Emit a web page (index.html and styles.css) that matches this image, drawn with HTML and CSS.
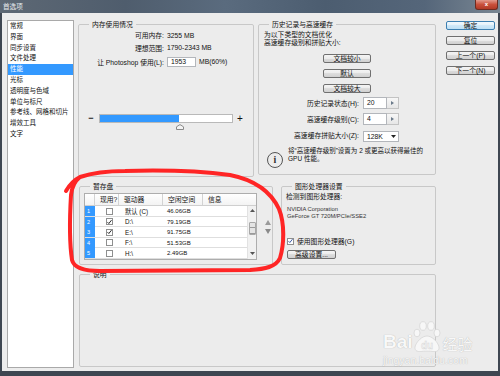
FILE: index.html
```html
<!DOCTYPE html>
<html lang="zh-CN">
<head>
<meta charset="utf-8">
<title>首选项</title>
<link rel="stylesheet" href="styles.css">
</head>
<body>
<div class="frame">
  <div class="titlebar">
    <span class="title">首选项</span>
    <span class="close">x</span>
  </div>
  <div class="client">
    <ul class="nav">
      <li>常规</li>
      <li>界面</li>
      <li>同步设置</li>
      <li>文件处理</li>
      <li class="sel">性能</li>
      <li>光标</li>
      <li>透明度与色域</li>
      <li>单位与标尺</li>
      <li>参考线、网格和切片</li>
      <li>增效工具</li>
      <li>文字</li>
    </ul>

    <div class="main">
      <div class="row row1">
        <fieldset class="grp mem">
          <legend>内存使用情况</legend>
          <div class="mem-grid">
            <span class="lbl">可用内存:</span><span class="val">3255 MB</span>
            <span class="lbl">理想范围:</span><span class="val">1790-2343 MB</span>
            <span class="lbl">让 Photoshop 使用(L):</span><span class="input mem-input">1953</span><span class="unit">MB(60%)</span>
          </div>
          <div class="slider">
            <span class="pm minus">−</span>
            <div class="track">
              <div class="fill" style="width:60%"></div>
              <svg class="thumb" width="8" height="6" viewBox="0 0 8 6"><path d="M0.5 5.5V2.8L4 0.6L7.5 2.8V5.5Z" fill="#f4f4f4" stroke="#8a8a8a" stroke-width="1"/></svg>
            </div>
            <span class="pm plus">+</span>
          </div>
        </fieldset>

        <fieldset class="grp hist">
          <legend>历史记录与高速缓存</legend>
          <p class="hist-intro">为以下类型的文档优化<br>高速缓存级别和拼贴大小:</p>
          <div class="hist-btns">
            <span class="btn">文档较小</span>
            <span class="btn">默认</span>
            <span class="btn">文档较大</span>
          </div>
          <div class="hist-grid">
            <span class="lbl">历史记录状态(H):</span>
            <span class="spin"><span class="input">20</span><span class="spin-btn"><svg width="3" height="4" viewBox="0 0 3 4"><path d="M0 0L3 2L0 4Z" fill="#6a7a8a"/></svg></span></span>
            <span class="lbl">高速缓存级别(C):</span>
            <span class="spin"><span class="input">4</span><span class="spin-btn"><svg width="3" height="4" viewBox="0 0 3 4"><path d="M0 0L3 2L0 4Z" fill="#6a7a8a"/></svg></span></span>
            <span class="lbl">高速缓存拼贴大小(Z):</span>
            <span class="select">128K<svg class="caret" width="5" height="3" viewBox="0 0 5 3"><path d="M0 0H5L2.5 3Z" fill="#222"/></svg></span>
          </div>
          <div class="info">
            <span class="info-icon">i</span>
            <p class="info-text">将“高速缓存级别”设置为 2 或更高以获得最佳的<br>GPU 性能。</p>
          </div>
        </fieldset>
      </div>

      <div class="row row2">
        <fieldset class="grp scratch">
          <legend>暂存盘</legend>
          <div class="scratch-body">
            <div class="tbl">
              <div class="thead">
                <span class="h"></span><span class="h">现用?</span><span class="h">驱动器</span><span class="h">空闲空间</span><span class="h last">信息</span>
              </div>
              <div class="tbody">
                <div class="rows">
                  <div class="tr"><span class="num">1</span><span class="cbc"><i class="cb"></i></span><span class="drv">默认 (C)</span><span class="free">46.06GB</span><span></span></div>
                  <div class="tr"><span class="num">2</span><span class="cbc"><i class="cb"><svg width="6" height="6" viewBox="0 0 6 6"><path d="M0.6 3.2L2.2 4.8L5.4 0.8" fill="none" stroke="#111" stroke-width="1.1"/></svg></i></span><span class="drv">D:\</span><span class="free">79.19GB</span><span></span></div>
                  <div class="tr"><span class="num">3</span><span class="cbc"><i class="cb"><svg width="6" height="6" viewBox="0 0 6 6"><path d="M0.6 3.2L2.2 4.8L5.4 0.8" fill="none" stroke="#111" stroke-width="1.1"/></svg></i></span><span class="drv">E:\</span><span class="free">91.75GB</span><span></span></div>
                  <div class="tr"><span class="num">4</span><span class="cbc"><i class="cb"></i></span><span class="drv">F:\</span><span class="free">51.53GB</span><span></span></div>
                  <div class="tr"><span class="num">5</span><span class="cbc"><i class="cb"></i></span><span class="drv">H:\</span><span class="free">2.49GB</span><span></span></div>
                </div>
                <div class="vscroll">
                  <svg width="5" height="3" viewBox="0 0 5 3"><path d="M0 3H5L2.5 0Z" fill="#555"/></svg>
                  <span class="vthumb"></span>
                  <svg width="5" height="3" viewBox="0 0 5 3"><path d="M0 0H5L2.5 3Z" fill="#555"/></svg>
                </div>
              </div>
            </div>
            <div class="updown">
              <svg width="6" height="5" viewBox="0 0 6 5"><path d="M0 5H6L3 0Z" fill="#9a9a9a"/></svg>
              <svg width="6" height="5" viewBox="0 0 6 5"><path d="M0 0H6L3 5Z" fill="#8a8a8a"/></svg>
            </div>
          </div>
        </fieldset>

        <fieldset class="grp gpu">
          <legend>图形处理器设置</legend>
          <div class="gpu-body">
            <p class="detect">检测到图形处理器:</p>
            <p class="gpu-name">NVIDIA Corporation<br>GeForce GT 720M/PCIe/SSE2</p>
            <div class="chk-row">
              <i class="cb"><svg width="6" height="6" viewBox="0 0 6 6"><path d="M0.6 3.2L2.2 4.8L5.4 0.8" fill="none" stroke="#2a4aa0" stroke-width="1.1"/></svg></i>
              <span>使用图形处理器(G)</span>
            </div>
            <span class="btn adv">高级设置...</span>
          </div>
        </fieldset>
      </div>

      <fieldset class="grp desc">
        <legend>说明</legend>
      </fieldset>
    </div>

    <div class="side-btns">
      <span class="btn default">确定</span>
      <span class="btn">复位</span>
      <span class="btn">上一个(P)</span>
      <span class="btn">下一个(N)</span>
    </div>
  </div>
</div>

<svg class="annot" width="500" height="376" viewBox="0 0 500 376">
  <path d="M66 191C70 184 74 180 80 177C95 172 110 171 125 171C160 170 200 171 230 175C255 180 271 192 279 209C285 224 284 245 280 258C276 267 265 269 250 270C200 270 150 271 100 271C85 271 74 268 72 260C69 240 70 212 71 195C72 186 75 181 80 177" fill="none" stroke="#ff2525" stroke-width="4" stroke-linecap="round" stroke-linejoin="round"/>
</svg>

<div class="wm">
  <div class="wm-logo">
    <span class="wm-bai">Bai</span>
    <svg class="wm-paw" width="30" height="32" viewBox="0 0 30 32">
      <g fill="#f7f7f7" stroke="#d2d2d2" stroke-width="0.7">
        <ellipse cx="5" cy="13" rx="3" ry="3.8"/>
        <ellipse cx="11" cy="6" rx="3.3" ry="4.3"/>
        <ellipse cx="19" cy="6" rx="3.3" ry="4.3"/>
        <ellipse cx="25" cy="13" rx="3" ry="3.8"/>
        <path d="M15 16C10 16 4 22 3 27C2.5 31 6 32 9 31.5C12 31 18 31 21 31.5C24 32 27.5 31 27 27C26 22 20 16 15 16Z"/>
      </g>
      <text x="15" y="29" text-anchor="middle" font-family="Liberation Sans, sans-serif" font-size="10" font-weight="bold" fill="#f2f2f2" stroke="#d6d6d6" stroke-width="0.4">du</text>
    </svg>
    <span class="wm-jy">经验</span>
  </div>
  <div class="wm-url">jingyan.baidu.com</div>
</div>
</body>
</html>
```
FILE: styles.css
```css
* { box-sizing: border-box; margin: 0; padding: 0; }
html, body { width: 500px; height: 376px; overflow: hidden; }
body {
  background: #3e4651;
  font-family: "Liberation Sans", "Noto Sans CJK SC", sans-serif;
  font-size: 6.8px;
  color: #111;
  position: relative;
}
.frame { width: 500px; height: 376px; display: flex; flex-direction: column; }

.titlebar {
  height: 13px;
  display: flex;
  justify-content: space-between;
  padding-left: 3px;
  background: linear-gradient(90deg, #5d6874 0%, #4f5d6d 25%, #5a6b7e 45%, #4c5d70 65%, #55667a 85%, #7a8793 100%);
}
.title { color: #e8ebee; line-height: 13px; font-size: 6.6px; }
.close {
  width: 23px;
  height: 10px;
  margin-right: 2px;
  background: linear-gradient(#e29a8c, #c9503b 50%, #b13a26);
  border: 1px solid #6e2b20;
  border-top: none;
  border-radius: 0 0 3px 3px;
  color: #fff;
  font-size: 6px;
  font-weight: bold;
  text-align: center;
  line-height: 8px;
}

.client {
  margin: 0 2px;
  height: 358px;
  background: #ececec;
  display: flex;
  padding: 7px 3px 3px 5px;
}

.nav {
  list-style: none;
  width: 67px;
  height: 348px;
  background: #fff;
  border: 1px solid #a9a9a9;
  font-size: 6.5px;
}
.nav li { height: 10.8px; line-height: 10.8px; padding-left: 2px; white-space: nowrap; }
.nav li.sel { background: #3399ff; color: #fff; }

.main { width: 358px; margin-left: 4px; display: flex; flex-direction: column; }
.row { display: flex; align-items: flex-start; }

.grp {
  border: 1px solid #c8c8c8;
  border-radius: 2px;
  min-width: 0;
  padding: 0;
  margin: 0;
}
.grp legend { margin-left: 10px; padding: 0 3px; line-height: 9px; font-size: 6.8px; }

.mem { width: 176px; height: 157px; }
.hist { width: 178px; height: 155px; margin-left: 4px; }

.mem-grid {
  display: grid;
  grid-template-columns: 85px max-content max-content;
  grid-template-rows: 12px 13px 15px;
  column-gap: 3px;
  align-items: center;
  white-space: nowrap;
}
.lbl { text-align: right; white-space: nowrap; }
.val { grid-column: span 2; }
.input {
  display: block;
  background: #fff;
  border: 1px solid #b3b6bb;
  padding-left: 3px;
}
.mem-input { width: 29px; height: 10px; line-height: 8px; }

.slider { display: flex; align-items: center; margin-top: 45px; height: 9px; }
.pm { width: 10px; text-align: center; font-size: 9px; font-weight: bold; line-height: 9px; }
.minus { margin-left: 7px; }
.plus { margin-left: 2px; font-weight: normal; font-size: 10px; }
.track {
  position: relative;
  margin-left: 3px;
  width: 134px;
  height: 9px;
  background: #fff;
  border: 1px solid #b9b9b9;
}
.fill { height: 100%; background: #3399ff; }
.thumb { position: absolute; left: 76px; top: 9px; }

.hist-intro { margin: 2px 0 0 5px; line-height: 8px; }
.hist-btns {
  display: flex;
  flex-direction: column;
  align-items: center;
  gap: 6px;
  margin-top: 7px;
}
.hist-btns .btn { width: 48px; }

.hist-grid {
  display: grid;
  grid-template-columns: 100px max-content;
  grid-auto-rows: 12px;
  column-gap: 4px;
  row-gap: 4px;
  align-items: center;
  margin-top: 4px;
}
.spin { display: flex; height: 12px; }
.spin .input { width: 24px; height: 12px; line-height: 10px; }
.spin-btn {
  width: 12px;
  height: 12px;
  border: 1px solid #c3c3c3;
  border-left: none;
  background: linear-gradient(#f7f7f7, #e6e6e6);
  display: flex;
  align-items: center;
  justify-content: center;
}
.select {
  display: flex;
  align-items: center;
  justify-content: space-between;
  width: 36px;
  height: 11px;
  margin-top: 2px;
  padding: 0 2px 0 3px;
  background: #fff;
  border: 1px solid #b3b6bb;
}

.info { display: flex; align-items: flex-start; margin-top: 6px; padding-left: 8px; }
.info-icon {
  width: 16px;
  height: 16px;
  margin-top: 5px;
  border: 1px solid #555;
  border-radius: 50%;
  font-family: "Liberation Serif", serif;
  font-size: 10px;
  font-weight: bold;
  line-height: 14px;
  text-align: center;
  color: #333;
}
.info-text { margin-left: 5px; line-height: 7.5px; white-space: nowrap; font-size: 6.5px; }

.row2 { margin-top: 5px; }
.scratch { width: 194px; height: 83px; margin-left: 1px; }
.gpu { width: 155px; height: 83px; margin-left: 8px; }

.scratch-body { display: flex; margin: 2px 0 0 4px; }
.tbl { width: 173px; border: 1px solid #adadad; background: #fff; }
.thead {
  display: grid;
  grid-template-columns: 10px 24px 44px 40px 1fr;
  height: 12px;
  background: linear-gradient(#ffffff, #f3f3f3);
  border-bottom: 1px solid #cfcfcf;
}
.h { border-right: 1px solid #d3d3d3; padding-left: 5px; line-height: 11px; white-space: nowrap; }
.h.last { border-right: none; }
.tbody { display: flex; height: 53px; overflow: hidden; }
.rows { flex: 1; }
.tr {
  display: grid;
  grid-template-columns: 10px 24px 44px 40px 1fr;
  height: 10.6px;
  border-bottom: 1px solid #dedede;
  align-items: center;
  font-size: 6px;
}
.num {
  height: 100%;
  background: #3399ff;
  color: #fff;
  padding-left: 2px;
  line-height: 10px;
  font-size: 5.5px;
}
.cbc { display: flex; padding-left: 11px; }
.cb {
  display: flex;
  align-items: center;
  justify-content: center;
  width: 7px;
  height: 7px;
  background: #fff;
  border: 1px solid #8e8f8f;
}
.drv { padding-left: 6px; white-space: nowrap; font-size: 6.3px; }
.free { padding-left: 4px; }
.vscroll {
  width: 9px;
  background: #f1f1f1;
  border-left: 1px solid #e2e2e2;
  display: flex;
  flex-direction: column;
  align-items: center;
  padding-top: 3px;
}
.vthumb {
  width: 7px;
  height: 13px;
  margin-top: 10px;
  margin-bottom: 17px;
  border: 1px solid #a8a8a8;
  border-radius: 1px;
  background: repeating-linear-gradient(#e4e4e4 0 4px, #9a9a9a 4px 5px, #e4e4e4 5px 6px) ;
}
.updown {
  display: flex;
  flex-direction: column;
  gap: 4px;
  margin-left: 8px;
  padding-top: 27px;
}

.gpu-body { padding-left: 4px; }
.detect { margin-top: 2px; line-height: 8px; }
.gpu-name { margin-top: 5px; line-height: 7px; font-size: 5.8px; color: #333; margin-left: 1px; }
.chk-row { display: flex; align-items: center; gap: 3px; height: 8px; margin-top: 17px; padding-left: 1px; }
.btn {
  display: block;
  height: 9px;
  line-height: 7px;
  text-align: center;
  border: 1px solid #707070;
  border-radius: 2px;
  background: linear-gradient(#f4f4f4, #ebebeb 50%, #dddddd 50%, #d0d0d0);
  white-space: nowrap;
}
.adv { width: 49px; margin-top: 5px; margin-left: 1px; }

.desc { width: 357px; height: 97px; margin-top: 5px; margin-left: 1px; }

.side-btns {
  width: 49px;
  margin-left: 10px;
  padding-top: 1px;
  display: flex;
  flex-direction: column;
  gap: 6px;
}
.btn.default {
  border-color: #3c7fb1;
  background: linear-gradient(#f1f8fd, #e2f1fb 50%, #cfe8f8 50%, #bddff5);
}

.annot { position: absolute; left: 0; top: 0; pointer-events: none; }

.wm { position: absolute; left: 383px; top: 320px; color: #f8f8f8; }
.wm-logo { display: flex; align-items: flex-end; height: 32px; }
.wm-bai {
  font-family: "Liberation Sans", sans-serif;
  font-size: 19px;
  font-weight: bold;
  line-height: 19px;
  margin-bottom: 1px;
  text-shadow: 0 0 1px rgba(0,0,0,0.3);
}
.wm-paw { margin-left: -1px; }
.wm-jy {
  font-family: "Noto Sans CJK SC", sans-serif;
  font-size: 15px;
  line-height: 17px;
  margin-left: 1px;
  text-shadow: 0 0 1px rgba(0,0,0,0.3);
}
.wm-url {
  font-family: "Liberation Sans", sans-serif;
  font-size: 10.5px;
  line-height: 12px;
  margin-top: 2px;
  text-shadow: 0 0 1px rgba(0,0,0,0.3);
}
```
